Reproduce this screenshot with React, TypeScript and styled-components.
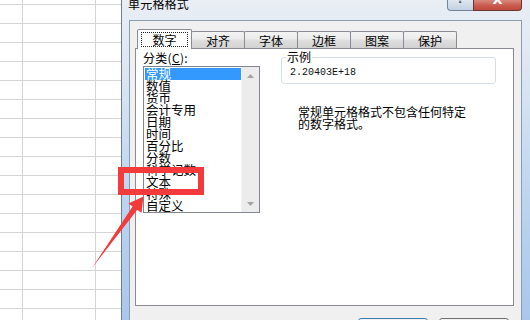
import React from "react";
import styled, { createGlobalStyle } from "styled-components";

const GlobalStyle = createGlobalStyle`
  html, body {
    margin: 0;
    padding: 0;
    background: #fff;
  }
  body {
    font-family: "Noto Sans CJK SC", "Noto Sans", sans-serif;
    font-size: 12px;
    color: #000;
  }
`;

const Screen = styled.div`
  position: relative;
  display: flex;
  width: 530px;
  height: 320px;
  overflow: hidden;
  background: #fff;
`;

/* ---- spreadsheet behind the dialog ---- */

const Sheet = styled.div`
  width: 121px;
  flex: none;
  overflow: hidden;
  background: #fff;
`;

const SheetGrid = styled.div`
  display: grid;
  grid-template-columns: 23px 73px 25px;
  grid-auto-rows: 19px;
  margin-top: -14px;
`;

const Cell = styled.div<{ $last?: boolean }>`
  box-sizing: border-box;
  border-bottom: 1px solid #d4d4d4;
  border-right: ${(p) => (p.$last ? "none" : "1px solid #d4d4d4")};
`;

/* ---- dialog window ---- */

const Window = styled.div`
  flex: 1;
  display: flex;
  flex-direction: column;
  min-width: 0;
  border-left: 1px solid #6f7f92;
  padding: 0 8px 0 7px;
  background: linear-gradient(
    180deg,
    #e9eef4 0%,
    #dfe8f2 18%,
    #c9dcf1 45%,
    #b5cfee 75%,
    #a9c7ec 100%
  );
`;

const TitleBar = styled.div`
  display: flex;
  align-items: flex-start;
  height: 20px;
  flex: none;
`;

const Title = styled.div`
  margin: -3px 0 0 -1px;
  font-size: 12px;
  line-height: 14px;
  letter-spacing: 0.2px;
`;

const CaptionButtons = styled.div`
  display: flex;
  margin-left: auto;
`;

const CaptionButton = styled.div<{ $close?: boolean }>`
  box-sizing: border-box;
  width: ${(p) => (p.$close ? "49px" : "27px")};
  height: 11px;
  display: flex;
  justify-content: center;
  overflow: hidden;
  border: 1px solid ${(p) => (p.$close ? "#6b3530" : "#73849a")};
  border-top: none;
  border-radius: ${(p) => (p.$close ? "0 0 4px 0" : "0 0 0 4px")};
  margin-left: ${(p) => (p.$close ? "-1px" : "0")};
  background: ${(p) =>
    p.$close
      ? "linear-gradient(180deg, #d98a7e 0%, #c9574b 60%, #c04a3e 100%)"
      : "linear-gradient(180deg, #dfe7f0 0%, #cdd9e6 60%, #c3d1e1 100%)"};
  color: ${(p) => (p.$close ? "#fff" : "#44505e")};
  font-family: "DejaVu Sans", sans-serif;
  font-weight: bold;
  font-size: ${(p) => (p.$close ? "13px" : "11px")};
  line-height: 10px;
`;

const Glyph = styled.span<{ $shift: number }>`
  margin-top: ${(p) => p.$shift}px;
`;

const Client = styled.div`
  flex: 1;
  display: flex;
  flex-direction: column;
  overflow: hidden;
  background: #f0f0f0;
  border: 1px solid #8a9cb2;
  border-bottom: none;
  padding: 8px 7px 0 5px;
`;

/* ---- tabs ---- */

const TabRow = styled.div`
  display: flex;
  align-items: flex-end;
  height: 19px;
  position: relative;
  z-index: 1;
`;

const Tab = styled.div<{ $active?: boolean }>`
  box-sizing: border-box;
  display: flex;
  align-items: center;
  justify-content: center;
  width: ${(p) => (p.$active ? "55px" : "54px")};
  height: ${(p) => (p.$active ? "20px" : "17px")};
  margin-left: ${(p) => (p.$active ? "2px" : "-1px")};
  margin-bottom: ${(p) => (p.$active ? "-1px" : "0")};
  border: 1px solid #898c95;
  border-bottom: none;
  border-radius: 2px 2px 0 0;
  background: ${(p) =>
    p.$active
      ? "#fff"
      : "linear-gradient(180deg, #f3f3f3 0%, #ebebeb 45%, #dedede 50%, #d2d2d2 100%)"};
  font-size: 12px;
  line-height: 13px;
  padding-top: ${(p) => (p.$active ? "0" : "1px")};
`;

const FocusRing = styled.span`
  flex: 1;
  align-self: stretch;
  display: flex;
  align-items: center;
  justify-content: center;
  margin: 2px 3px 2px 3px;
  border: 1px dotted #222;
`;

const Panel = styled.div`
  box-sizing: border-box;
  height: 258px;
  flex: none;
  background: #fff;
  border: 1px solid #898c95;
  display: grid;
  grid-template-columns: 116px 215px;
  column-gap: 22px;
  align-items: start;
  padding-left: 7px;
`;

/* ---- left column: category list ---- */

const Column = styled.div`
  display: flex;
  flex-direction: column;
`;

const FieldLabel = styled.div`
  margin: 2px 0 1px;
  font-size: 12px;
  line-height: 14px;
  letter-spacing: 0.3px;

  u {
    text-decoration-thickness: 1px;
  }
`;

const ListBox = styled.div`
  box-sizing: border-box;
  display: flex;
  width: 117px;
  height: 147px;
  border: 1px solid #828790;
  background: #fff;
`;

const Items = styled.ul`
  flex: 1;
  margin: 0;
  padding: 1px 0 0 1px;
  list-style: none;
`;

const Item = styled.li<{ $selected?: boolean }>`
  height: 12px;
  line-height: 12px;
  font-size: 12.5px;
  padding-left: 1px;
  white-space: nowrap;
  background: ${(p) => (p.$selected ? "#3399ff" : "transparent")};
  color: ${(p) => (p.$selected ? "#fff" : "#000")};
`;

const ScrollBar = styled.div`
  width: 17px;
  flex: none;
  display: flex;
  flex-direction: column;
  justify-content: space-between;
  background: #ececec;
  border-left: 1px solid #f4f4f4;
`;

const ScrollButton = styled.div`
  height: 17px;
  display: flex;
  align-items: center;
  justify-content: center;
`;

/* ---- right column: sample + description ---- */

const RightColumn = styled.div`
  display: flex;
  flex-direction: column;
`;

const GroupBox = styled.fieldset`
  margin: 2px 0 0;
  padding: 0 0 0 4px;
  border: 1px solid #d5dfe5;
  border-radius: 3px;
  min-width: 0;
`;

const Legend = styled.legend`
  padding: 0 1px;
  font-size: 12px;
  line-height: 12px;
`;

const SampleValue = styled.div`
  height: 20px;
  padding-left: 4px;
  font-family: "Liberation Mono", "DejaVu Sans Mono", monospace;
  font-size: 10px;
  line-height: 19px;
  color: #111;
`;

const Description = styled.p`
  margin: 22px 0 0 17px;
  max-width: 170px;
  font-size: 12px;
  line-height: 12px;
`;

/* ---- dialog buttons ---- */

const ButtonRow = styled.div`
  display: flex;
  justify-content: flex-end;
  gap: 11px;
  margin-top: 12px;
  padding-right: 5px;
`;

const DialogButton = styled.button<{ $default?: boolean }>`
  box-sizing: border-box;
  width: 70px;
  height: 23px;
  border: 1px solid ${(p) => (p.$default ? "#3c7fb1" : "#707070")};
  border-radius: 3px;
  background: linear-gradient(180deg, #f2f2f2 0%, #ebebeb 45%, #dddddd 50%, #cfcfcf 100%);
  font-family: "Noto Sans CJK SC", sans-serif;
  font-size: 12px;
`;

/* ---- annotation over the screenshot ---- */

const Highlight = styled.div`
  position: absolute;
  left: 118px;
  top: 167px;
  width: 86px;
  height: 28px;
  box-sizing: border-box;
  border: 6px solid #f33b3b;
  pointer-events: none;
`;

const Overlay = styled.svg`
  position: absolute;
  left: 0;
  top: 0;
  pointer-events: none;
`;

const categories = [
  "常规",
  "数值",
  "货币",
  "会计专用",
  "日期",
  "时间",
  "百分比",
  "分数",
  "科学记数",
  "文本",
  "特殊",
  "自定义",
];

const tabs = ["数字", "对齐", "字体", "边框", "图案", "保护"];

function Arrow({ up }: { up?: boolean }) {
  return (
    <svg width="7" height="4" viewBox="0 0 7 4">
      <path d={up ? "M0 4 L3.5 0 L7 4 Z" : "M0 0 L3.5 4 L7 0 Z"} fill="#a3a3a3" />
    </svg>
  );
}

export default function App() {
  const rows = Array.from({ length: 18 });
  return (
    <>
      <GlobalStyle />
      <Screen>
        <Sheet>
          <SheetGrid>
            {rows.map((_, i) => (
              <React.Fragment key={i}>
                <Cell />
                <Cell />
                <Cell $last />
              </React.Fragment>
            ))}
          </SheetGrid>
        </Sheet>

        <Window>
          <TitleBar>
            <Title>单元格格式</Title>
            <CaptionButtons>
              <CaptionButton>
                <Glyph $shift={-5}>?</Glyph>
              </CaptionButton>
              <CaptionButton $close>
                <Glyph $shift={-5}>X</Glyph>
              </CaptionButton>
            </CaptionButtons>
          </TitleBar>

          <Client>
            <TabRow>
              {tabs.map((t, i) =>
                i === 0 ? (
                  <Tab key={t} $active>
                    <FocusRing>{t}</FocusRing>
                  </Tab>
                ) : (
                  <Tab key={t}>{t}</Tab>
                )
              )}
            </TabRow>

            <Panel>
              <Column>
                <FieldLabel>
                  分类(<u>C</u>):
                </FieldLabel>
                <ListBox>
                  <Items>
                    {categories.map((c, i) => (
                      <Item key={c} $selected={i === 0}>
                        {c}
                      </Item>
                    ))}
                  </Items>
                  <ScrollBar>
                    <ScrollButton>
                      <Arrow up />
                    </ScrollButton>
                    <ScrollButton>
                      <Arrow />
                    </ScrollButton>
                  </ScrollBar>
                </ListBox>
              </Column>

              <RightColumn>
                <GroupBox>
                  <Legend>示例</Legend>
                  <SampleValue>2.20403E+18</SampleValue>
                </GroupBox>
                <Description>常规单元格格式不包含任何特定的数字格式。</Description>
              </RightColumn>
            </Panel>

            <ButtonRow>
              <DialogButton $default>确定</DialogButton>
              <DialogButton>取消</DialogButton>
            </ButtonRow>
          </Client>
        </Window>

        <Highlight />
        <Overlay width="530" height="320" viewBox="0 0 530 320">
          <polygon
            points="92,268 132.6,206.4 128.3,203.6 143.5,196.5 141.5,213 137.3,209.8"
            fill="#f33b3b"
          />
        </Overlay>
      </Screen>
    </>
  );
}
